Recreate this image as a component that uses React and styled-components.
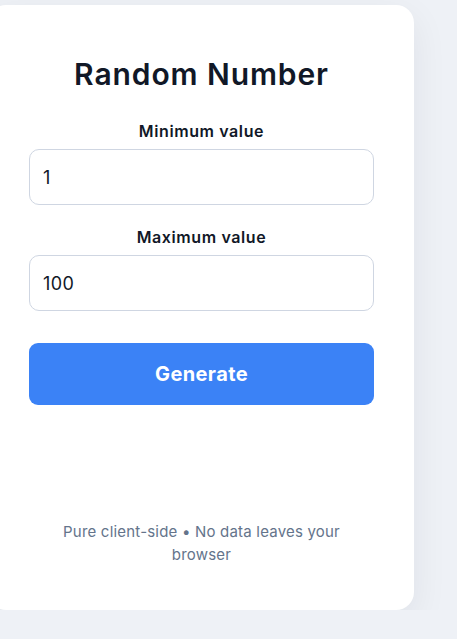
import React, { useState } from 'react';
import styled, { createGlobalStyle } from 'styled-components';

const Global = createGlobalStyle`
  html, body {
    margin: 0;
    padding: 0;
    background: #eef1f6;
    overflow: hidden;
  }
  * { box-sizing: border-box; }
`;

const Page = styled.div`
  display: flex;
  padding-top: 5px;
  font-family: Inter, "Open Sans", sans-serif;
`;

const Card = styled.div`
  width: 426px;
  min-height: 605px;
  margin-left: -12px;
  background: #ffffff;
  border-radius: 18px;
  box-shadow: 0 12px 36px rgba(15, 23, 42, 0.07);
  padding: 49px 40px 44px 41px;
  display: flex;
  flex-direction: column;
`;

const Title = styled.h1`
  margin: 0 0 27px;
  font-size: 30px;
  font-weight: 600;
  letter-spacing: 0.9px;
  color: #111827;
  text-align: center;
  line-height: 40px;
`;

const Field = styled.div`
  display: flex;
  flex-direction: column;
  gap: 8px;
  margin-bottom: ${p => p.$last ? '32px' : '22px'};
`;

const Label = styled.label`
  font-size: 16px;
  font-weight: 600;
  letter-spacing: 0.6px;
  color: #111827;
  text-align: center;
  line-height: 20px;
`;

const Input = styled.input`
  height: 56px;
  width: 100%;
  border: 1px solid #cfd6e2;
  border-radius: 10px;
  padding: 0 13px;
  font-family: inherit;
  font-size: 18px;
  letter-spacing: 0.4px;
  color: #111827;
  outline: none;
  background: #fff;
`;

const Button = styled.button`
  height: 62px;
  width: 100%;
  border: none;
  border-radius: 9px;
  background: #3b82f6;
  color: #ffffff;
  font-family: inherit;
  font-size: 20px;
  font-weight: 700;
  letter-spacing: 0.4px;
  cursor: pointer;
`;

const Footer = styled.p`
  margin: auto 0 0;
  text-align: center;
  font-size: 15px;
  line-height: 23px;
  letter-spacing: 0.2px;
  color: #64748b;
  padding: 0 20px;
`;

export default function App() {
  const [min, setMin] = useState('1');
  const [max, setMax] = useState('100');
  return (
    <Page>
      <Global />
      <Card>
        <Title>Random Number</Title>
        <Field>
          <Label>Minimum value</Label>
          <Input value={min} onChange={e => setMin(e.target.value)} />
        </Field>
        <Field $last>
          <Label>Maximum value</Label>
          <Input value={max} onChange={e => setMax(e.target.value)} />
        </Field>
        <Button>Generate</Button>
        <Footer>Pure client-side • No data leaves your browser</Footer>
      </Card>
    </Page>
  );
}
